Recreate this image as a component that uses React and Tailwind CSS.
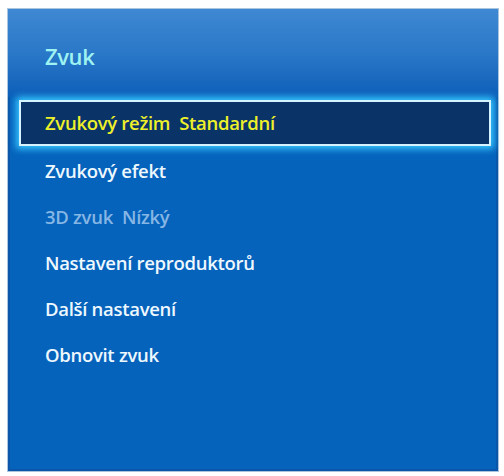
import React from 'react';

const items = [
    { label: 'Zvukový efekt' },
    { label: '3D zvuk  Nízký', disabled: true },
    { label: 'Nastavení reproduktorů' },
    { label: 'Další nastavení' },
    { label: 'Obnovit zvuk' },
];

const App = () => {
    return (
        <div className="w-[504px] h-[476px] bg-white pt-[8px] pl-[7px] font-['Open_Sans',sans-serif]">
            <div className="w-[492px] h-[464px] border border-[#a9c4dc] bg-[#0563bc] shadow-[inset_0_0_0_2px_#0b56a8] flex flex-col">
                {/* Header */}
                <div className="h-[88px] shrink-0 bg-linear-to-b from-[#3f88d3] via-[#2a78c8] to-[#0b5eb8] pl-[37px] pt-[6px] flex items-center">
                    <h1 className="text-[#9ef3f2] text-[22px] font-semibold tracking-[-0.4px]">Zvuk</h1>
                </div>

                {/* Selected row */}
                <div className="mt-[3px] ml-[11px] w-[472px] h-[46px] shrink-0 border-2 border-[#d6f4ff] bg-[#0a3467] shadow-[0_0_7px_3px_#38c6ff] flex items-center pl-[24px]">
                    <p className="text-[#eef02a] text-[18.5px] font-semibold tracking-[-0.3px] whitespace-pre">Zvukový režim  Standardní</p>
                </div>

                {/* Other rows */}
                <div className="flex flex-col pl-[37px] pt-[2px]">
                    {items.map((item) => (
                        <div key={item.label} className="h-[46px] flex items-center">
                            <p className={`text-[18.5px] font-semibold tracking-[-0.3px] whitespace-pre ${item.disabled ? 'text-[#86b6e4]' : 'text-[#eef8ff]'}`}>
                                {item.label}
                            </p>
                        </div>
                    ))}
                </div>
            </div>
        </div>
    );
};

export default App;
